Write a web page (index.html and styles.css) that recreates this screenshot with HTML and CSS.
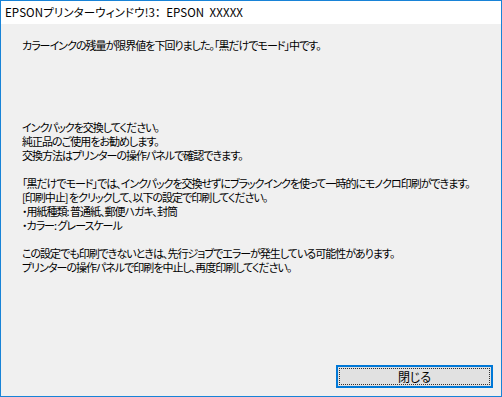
FILE: index.html
```html
<!DOCTYPE html>
<html lang="ja">
<head>
    <meta charset="UTF-8">
    <title>EPSONプリンターウィンドウ!3</title>
    <link rel="stylesheet" href="styles.css">
</head>
<body>
    <div class="window">
        <div class="titlebar">EPSONプリンターウィンドウ!3： &nbsp;EPSON &nbsp;XXXXX</div>
        <div class="content">
            <p class="headline">カラーインクの残量が限界値を下回りました。「黒だけでモード」中です。</p>
            <div class="message">
                <p>インクパックを交換してください。<br>
                純正品のご使用をお勧めします。<br>
                交換方法はプリンターの操作パネルで確認できます。</p>
                <p>「黒だけでモード」では、インクパックを交換せずにブラックインクを使って一時的にモノクロ印刷ができます。<br>
                [印刷中止] をクリックして、以下の設定で印刷してください。<br>
                ・用紙種類: 普通紙、郵便ハガキ、封筒<br>
                ・カラー: グレースケール</p>
                <p>この設定でも印刷できないときは、先行ジョブでエラーが発生している可能性があります。<br>
                プリンターの操作パネルで印刷を中止し、再度印刷してください。</p>
            </div>
            <div class="actions">
                <button type="button" class="button"><span class="focus">閉じる</span></button>
            </div>
        </div>
    </div>
</body>
</html>
```

FILE: styles.css
```css
body {
    margin: 0;
    font-family: "Noto Sans CJK JP", "Noto Sans", sans-serif;
    font-size: 11px;
    font-feature-settings: "palt";
    color: #000;
}

.window {
    width: 502px;
    height: 397px;
    box-sizing: border-box;
    border: 1px solid #1883d7;
    display: flex;
    flex-direction: column;
}

.titlebar {
    height: 23px;
    line-height: 23px;
    padding-left: 4px;
    background-color: #fff;
    font-size: 11.5px;
    letter-spacing: 0.1px;
}

.content {
    flex: 1;
    background-color: #f0f0f0;
    padding: 14px 8px 8px 21px;
    display: flex;
    flex-direction: column;
    letter-spacing: -1px;
}

p {
    margin: 0;
    line-height: 14px;
    white-space: nowrap;
}

.message {
    margin-top: 68px;
}

.message p {
    margin-bottom: 14px;
}

.actions {
    margin-top: auto;
    display: flex;
    justify-content: flex-end;
}

.button {
    width: 157px;
    height: 23px;
    padding: 1px;
    border: 2px solid #0078d7;
    background-color: #e1e1e1;
    font: inherit;
    font-size: 12px;
    letter-spacing: 0;
    cursor: pointer;
}

.focus {
    display: block;
    height: 100%;
    box-sizing: border-box;
    border: 1px dotted #333;
    line-height: 15px;
}
```
